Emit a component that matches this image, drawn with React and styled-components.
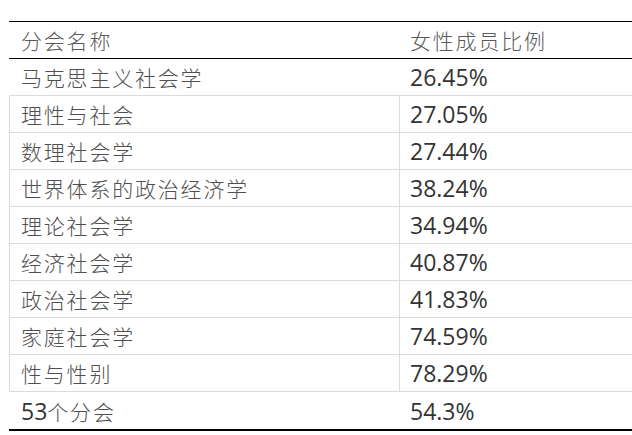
import React from "react";
import styled, { createGlobalStyle } from "styled-components";

const Global = createGlobalStyle`
  html, body { margin: 0; padding: 0; background: #fff; overflow: hidden; }
  body { font-family: "Open Sans", "Noto Sans CJK SC", sans-serif; }
`;

const Page = styled.div`
  padding: 21px 0 0 9px;
`;

const Table = styled.div`
  width: 623px;
  border-top: 1px solid #000;
  border-bottom: 2px solid #000;
`;

const Row = styled.div`
  display: grid;
  grid-template-columns: 390px 1fr;
  height: 36px;
  border-bottom: 1px solid ${(p) => (p.$head ? "#000" : "#dcdcdc")};
  &:last-child { border-bottom: none; height: 37px; }
`;

const Cell = styled.div`
  display: flex;
  align-items: center;
  font-size: 23px;
  color: ${(p) => (p.$head ? "#555" : "#333")};
  padding-left: ${(p) => (p.$boxed ? 11 : 12)}px;
  border-left: ${(p) => (p.$boxed ? "1px solid #dcdcdc" : "none")};
  white-space: nowrap;
  &:nth-child(2) {
    padding-left: ${(p) => (p.$boxed ? 10 : 11)}px;
  }
`;

const Cjk = styled.span`
  font-family: "Noto Sans CJK SC", sans-serif;
  font-weight: 300;
  font-size: 21px;
  letter-spacing: 1.8px;
  color: ${(p) => (p.$head ? "#5a5a5a" : "#505050")};
`;

const Num = styled.span`
  font-family: "Open Sans", sans-serif;
`;

const rows = [
  ["马克思主义社会学", "26.45%", false],
  ["理性与社会", "27.05%", true],
  ["数理社会学", "27.44%", true],
  ["世界体系的政治经济学", "38.24%", true],
  ["理论社会学", "34.94%", true],
  ["经济社会学", "40.87%", true],
  ["政治社会学", "41.83%", true],
  ["家庭社会学", "74.59%", true],
  ["性与性别", "78.29%", true],
];

export default function App() {
  return (
    <Page>
      <Global />
      <Table>
        <Row $head>
          <Cell $head>
            <Cjk $head>分会名称</Cjk>
          </Cell>
          <Cell $head>
            <Cjk $head>女性成员比例</Cjk>
          </Cell>
        </Row>
        {rows.map(([name, pct, boxed]) => (
          <Row key={name}>
            <Cell $boxed={boxed}>
              <Cjk>{name}</Cjk>
            </Cell>
            <Cell $boxed={boxed}>
              <Num>{pct}</Num>
            </Cell>
          </Row>
        ))}
        <Row>
          <Cell>
            <Num>53</Num>
            <Cjk>个分会</Cjk>
          </Cell>
          <Cell>
            <Num>54.3%</Num>
          </Cell>
        </Row>
      </Table>
    </Page>
  );
}
